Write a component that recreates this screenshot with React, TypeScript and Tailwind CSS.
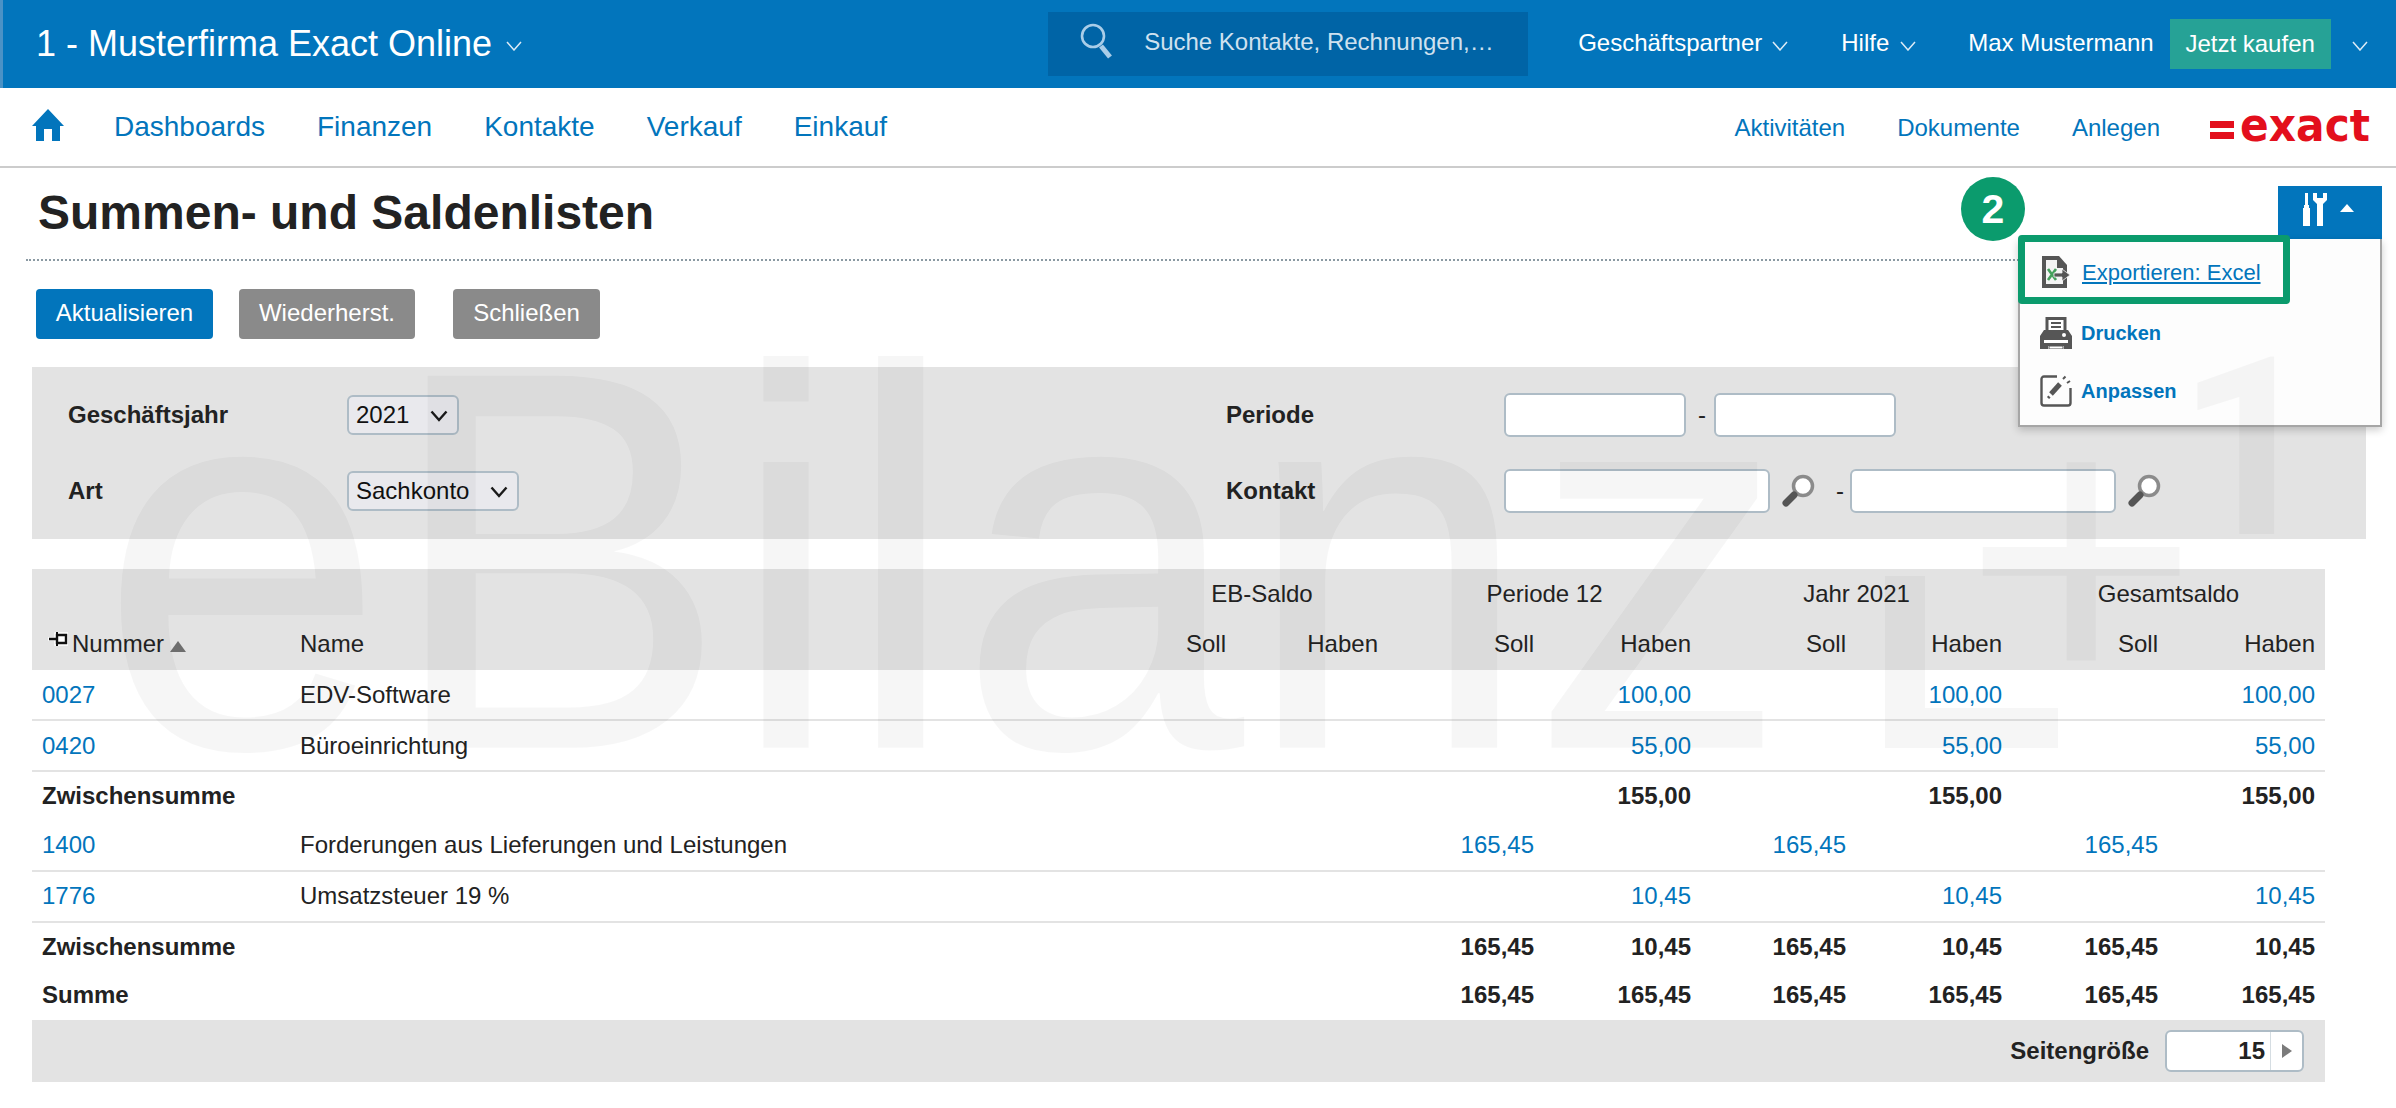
import { ReactNode } from "react";

const blue = "text-[#0275bc]";

type Row = { kind: "item" | "sum"; no?: string; name?: string; label?: string; values: string[] };

const rows: Row[] = [
  { kind: "item", no: "0027", name: "EDV-Software", values: ["", "", "", "100,00", "", "100,00", "", "100,00"] },
  { kind: "item", no: "0420", name: "Büroeinrichtung", values: ["", "", "", "55,00", "", "55,00", "", "55,00"] },
  { kind: "sum", label: "Zwischensumme", values: ["", "", "", "155,00", "", "155,00", "", "155,00"] },
  { kind: "item", no: "1400", name: "Forderungen aus Lieferungen und Leistungen", values: ["", "", "165,45", "", "165,45", "", "165,45", ""] },
  { kind: "item", no: "1776", name: "Umsatzsteuer 19 %", values: ["", "", "", "10,45", "", "10,45", "", "10,45"] },
  { kind: "sum", label: "Zwischensumme", values: ["", "", "165,45", "10,45", "165,45", "10,45", "165,45", "10,45"] },
  { kind: "sum", label: "Summe", values: ["", "", "165,45", "165,45", "165,45", "165,45", "165,45", "165,45"] },
];

function Chevron({ className = "" }: { className?: string }) {
  return (
    <svg width="16" height="10" viewBox="0 0 16 10" fill="none" className={className}>
      <path d="M1 1l7 8 7-8" stroke="#dcebf6" strokeWidth="1.5" />
    </svg>
  );
}

function SelectBox({ width, value, options }: { width: string; value: string; options: string[] }) {
  return (
    <div className={`relative ml-px h-10 ${width}`}>
      <select
        defaultValue={value}
        className="h-full w-full appearance-none rounded-[6px] border-2 border-[#aebcc6] bg-[#e9e9ed] pl-[7px] text-[24px] text-[#111]"
      >
        {options.map((o) => (
          <option key={o}>{o}</option>
        ))}
      </select>
      <svg width="18" height="12" viewBox="0 0 18 12" fill="none" className="pointer-events-none absolute right-[11px] top-[15px]">
        <path d="M1.5 1.5L9 10l7.5-8.5" stroke="#1a1a1a" strokeWidth="2.4" />
      </svg>
    </div>
  );
}

function Field({ width }: { width: string }) {
  return <input className={`h-11 rounded-[6px] border-2 border-[#aebcc6] bg-white ${width}`} />;
}

function Magnifier() {
  return (
    <svg width="34" height="34" viewBox="0 0 34 34" className="ml-3 shrink-0">
      <circle cx="21" cy="12" r="9.5" fill="#fff" stroke="#8b8b8b" strokeWidth="3.5" />
      <path d="M12 21L4 29" stroke="#555" strokeWidth="7" strokeLinecap="round" />
    </svg>
  );
}

function Label({ children }: { children: ReactNode }) {
  return <div className="text-[24px] font-bold text-[#222]">{children}</div>;
}

function ExcelIcon() {
  return (
    <svg width="28" height="32" viewBox="0 0 28 32">
      <path d="M0 0h17l8 9v23H0z" fill="#565656" />
      <path d="M4 4h11v8h6v16H4z" fill="#f4f4f4" />
      <path d="M6 13l8 11M14 13L6 24" stroke="#45a05c" strokeWidth="2.6" />
      <path d="M12 17h8v-4l8 6-8 6v-4h-8z" fill="#565656" stroke="#f4f4f4" strokeWidth="0.8" />
    </svg>
  );
}

function PrinterIcon() {
  return (
    <svg width="32" height="32" viewBox="0 0 32 32">
      <path d="M7 1.500h18v14H7z" fill="#fff" stroke="#565656" strokeWidth="3" />
      <path d="M11 6h10M11 10h10" stroke="#565656" strokeWidth="2" />
      <path d="M4 13h24l4 6v13H24v-3H8v3H0V19z" fill="#565656" />
      <path d="M4 23h24v3H4z" fill="#fff" />
      <circle cx="24" cy="18" r="2" fill="#fff" />
      <path d="M9 29h14v3H9z" fill="#fff" stroke="#565656" strokeWidth="1" />
    </svg>
  );
}

function EditIcon() {
  return (
    <svg width="32" height="32" viewBox="0 0 32 32" fill="none">
      <path d="M17 1.5H4A2.5 2.5 0 001.500 4v24A2.500 2.500 0 004 30.500h24a2.500 2.500 0 002.500-2.500V13" stroke="#565656" strokeWidth="2.400" />
      <path d="M11 19l9-10" stroke="#565656" strokeWidth="5" />
      <path d="M8 23l1.500-1.500" stroke="#565656" strokeWidth="3" />
      <path d="M23 4l2.500-2.500M27 8l3-2" stroke="#565656" strokeWidth="2" />
    </svg>
  );
}

function ToolsMenu() {
  return (
    <div className="relative mt-[18px]">
      <div className="flex h-[53px] w-[104px] items-start bg-[#0275bc] pl-[25px] pt-[7px]">
        <svg width="24" height="33" viewBox="0 0 24 33" fill="#fff">
          <path d="M2 0h3v12h1v3h1v18H0V15h1v-3h1z" />
          <path d="M10 0h4v5h6V0h4v7l-4 4v22h-6V11l-4-4z" />
        </svg>
        <svg width="14" height="8" viewBox="0 0 14 8" fill="#fff" className="ml-[13px] mt-[11px]">
          <path d="M7 0l7 8H0z" />
        </svg>
      </div>
      <div className="absolute -left-[317px] top-[-9px] flex h-16 w-16 items-center justify-center rounded-full bg-[#0b9b6d] text-[41px] font-bold leading-none text-white">
        2
      </div>
      <div className="absolute right-0 top-full z-10 w-[364px] border-2 border-t-0 border-[#a6a6a6] bg-[#fdfdfd] pb-[5px] pl-[20px] pt-1 text-[20px] shadow-[0_3px_8px_rgba(0,0,0,0.2)]">
        <a className={`flex h-[58px] items-center ${blue}`}>
          <span className="mx-[2px] flex w-[30px]"><ExcelIcon /></span>
          <span className="ml-[8px] text-[22px] underline">Exportieren: Excel</span>
        </a>
        <a className={`mt-[3px] flex h-[58px] items-center font-bold ${blue}`}>
          <PrinterIcon />
          <span className="ml-[9px]">Drucken</span>
        </a>
        <a className={`flex h-[58px] items-center font-bold ${blue}`}>
          <EditIcon />
          <span className="ml-[9px]">Anpassen</span>
        </a>
        <div className="absolute -left-[2px] -top-1 h-[69px] w-[272px] rounded-[4px] border-[7px] border-[#0b9b6d]" />
      </div>
    </div>
  );
}

export default function App() {
  return (
    <div className="relative h-[1108px] w-[2396px] overflow-hidden bg-white font-['Liberation_Sans',Arial,sans-serif] text-[24px] text-[#222]">
      {/* top bar */}
      <div className="flex h-[88px] items-center border-l-[3px] border-[#4a92c6] bg-[#0275bc] text-white">
        <div className="ml-[33px] text-[36px] leading-none">1 - Musterfirma Exact Online</div>
        <Chevron className="ml-[14px] mt-[3px]" />
        <div className="ml-[526px] flex h-16 w-[480px] items-center bg-[#0064a6] pl-[32px]">
          <svg width="34" height="38" viewBox="0 0 34 38" fill="none" className="-mt-1">
            <circle cx="13" cy="13" r="11" stroke="#a9cde8" strokeWidth="2.600" />
            <path d="M21 23l9 11" stroke="#a9cde8" strokeWidth="5" />
          </svg>
          <span className="-mt-[5px] ml-[30px] text-[#cfe1ef]">Suche Kontakte, Rechnungen,…</span>
        </div>
        <span className="ml-[50px] -mt-[2px]">Geschäftspartner</span>
        <Chevron className="ml-[10px] mt-[3px]" />
        <span className="ml-[53px] -mt-[2px]">Hilfe</span>
        <Chevron className="ml-[11px] mt-[3px]" />
        <span className="ml-[52px] -mt-[2px]">Max Mustermann</span>
        <div className="ml-[16px] flex h-[50px] w-[161px] items-center justify-center bg-[#26a296]">Jetzt kaufen</div>
        <Chevron className="ml-[21px] mt-[3px]" />
      </div>

      {/* nav */}
      <div className={`flex h-20 items-center border-b-2 border-[#cccccc] ${blue}`}>
        <svg width="32" height="32" viewBox="0 0 32 32" fill="#0275bc" className="ml-8 mt-[-4px]">
          <path d="M16 0l16 17h-4v15h-8V20h-8v12H4V17H0z" />
        </svg>
        <div className="ml-[50px] flex gap-[52px] text-[28px]">
          <span>Dashboards</span>
          <span>Finanzen</span>
          <span>Kontakte</span>
          <span>Verkauf</span>
          <span>Einkauf</span>
        </div>
        <div className="ml-auto mt-[2px] flex gap-[52px]">
          <span>Aktivitäten</span>
          <span>Dokumente</span>
          <span>Anlegen</span>
        </div>
        <svg width="160" height="36" viewBox="0 0 160 36" className="ml-[50px] mr-[26px] mt-[2px]" fill="#e30f1c">
          <rect x="0" y="11" width="24" height="7" />
          <rect x="0" y="22" width="24" height="7" />
          <text x="30" y="31" textLength="130" lengthAdjust="spacingAndGlyphs" fontFamily="DejaVu Sans" fontWeight="700" fontSize="47">
            exact
          </text>
        </svg>
      </div>

      {/* title */}
      <div className="ml-[26px] mr-[14px] flex h-[93px] items-start justify-between border-b-2 border-dotted border-[#8b9aa3]">
        <h1 className="ml-3 mt-[22px] text-[48px] font-bold leading-[46px] text-[#222]">Summen- und Saldenlisten</h1>
        <ToolsMenu />
      </div>

      {/* buttons */}
      <div className="ml-9 mt-[28px] flex text-white">
        <button className="h-[50px] w-[177px] rounded bg-[#0275bc] pb-[2px]">Aktualisieren</button>
        <button className="ml-[26px] h-[50px] w-[176px] rounded bg-[#8a8a8a] pb-[2px]">Wiederherst.</button>
        <button className="ml-[38px] h-[50px] w-[147px] rounded bg-[#8a8a8a] pb-[2px]">Schließen</button>
      </div>

      {/* filter */}
      <div className="ml-8 mt-[28px] grid h-[172px] w-[2334px] grid-cols-[278px_880px_278px_1fr] grid-rows-[44px_44px] items-center gap-y-[32px] bg-[#e3e3e3] pl-9 pt-[26px]">
        <Label>Geschäftsjahr</Label>
        <SelectBox width="w-[112px]" value="2021" options={["2021", "2020"]} />
        <Label>Periode</Label>
        <div className="flex items-center">
          <Field width="w-[182px]" />
          <span className="mx-[12px] w-[4px]">-</span>
          <Field width="w-[182px]" />
        </div>
        <Label>Art</Label>
        <SelectBox width="w-[172px]" value="Sachkonto" options={["Sachkonto", "Debitor"]} />
        <Label>Kontakt</Label>
        <div className="flex items-center">
          <Field width="w-[266px]" />
          <Magnifier />
          <span className="ml-[20px] mr-[10px] w-[4px]">-</span>
          <Field width="w-[266px]" />
          <Magnifier />
        </div>
      </div>

      {/* table */}
      <table className="ml-8 mt-[30px] w-[2293px] table-fixed border-separate border-spacing-0">
        <colgroup>
          <col className="w-[258px]" />
          <col className="w-[846px]" />
          <col className="w-[100px]" />
          <col className="w-[152px]" />
          <col className="w-[156px]" />
          <col className="w-[157px]" />
          <col className="w-[155px]" />
          <col className="w-[156px]" />
          <col className="w-[156px]" />
          <col className="w-[157px]" />
        </colgroup>
        <thead className="bg-[#e3e3e3] font-normal">
          <tr className="h-[49px]">
            <th colSpan={2} />
            <th colSpan={2} className="pt-[1px] font-normal">EB-Saldo</th>
            <th colSpan={2} className="pt-[1px] font-normal">Periode 12</th>
            <th colSpan={2} className="pt-[1px] font-normal">Jahr 2021</th>
            <th colSpan={2} className="pt-[1px] font-normal">Gesamtsaldo</th>
          </tr>
          <tr className="h-[52px]">
            <th className="pl-[16px] text-left font-normal">
              <div className="flex items-center">
                <svg width="20" height="16" viewBox="0 0 20 16" className="-mt-[8px]">
                  <path d="M0 7h8M8 2h11v10H8z" fill="#fff" stroke="#fff" strokeWidth="3.500" />
                  <path d="M1 7h7M9 3h9v8H9z" fill="none" stroke="#111" strokeWidth="2.400" />
                  <path d="M9 0v14" stroke="#111" strokeWidth="2" />
                </svg>
                <span className="ml-[4px]">Nummer</span>
                <svg width="16" height="11" viewBox="0 0 16 11" fill="#6e6e6e" className="ml-[6px] mt-[4px]">
                  <path d="M8 0l8 11H0z" />
                </svg>
              </div>
            </th>
            <th className="pl-[10px] text-left font-normal">Name</th>
            {["Soll", "Haben", "Soll", "Haben", "Soll", "Haben", "Soll", "Haben"].map((h, i) => (
              <th key={i} className="pr-[10px] text-right font-normal">{h}</th>
            ))}
          </tr>
        </thead>
        <tbody>
          {rows.map((r, i) =>
            r.kind === "item" ? (
              <tr key={i} className="h-[51px]">
                <td className={`border-b-2 border-[#e3e3e3] pl-[10px] ${blue}`}>{r.no}</td>
                <td className="border-b-2 border-[#e3e3e3] pl-[10px]">{r.name}</td>
                {r.values.map((v, j) => (
                  <td key={j} className={`border-b-2 border-[#e3e3e3] pr-[10px] text-right ${blue}`}>{v}</td>
                ))}
              </tr>
            ) : (
              <tr key={i} className="h-[48.500px] font-bold">
                <td colSpan={2} className="pl-[10px]">{r.label}</td>
                {r.values.map((v, j) => (
                  <td key={j} className="pr-[10px] text-right">{v}</td>
                ))}
              </tr>
            )
          )}
        </tbody>
      </table>

      {/* footer */}
      <div className="ml-8 flex h-[62px] w-[2293px] items-center justify-end bg-[#e3e3e3] pr-[21px]">
        <span className="font-bold">Seitengröße</span>
        <div className="ml-4 flex h-[42px] w-[139px] overflow-hidden rounded-[6px] border-2 border-[#aebcc6] bg-white">
          <span className="flex w-[103px] items-center justify-end pr-[5px] font-bold">15</span>
          <span className="flex flex-1 items-center justify-center border-l border-[#d5dde2]">
            <svg width="12" height="14" viewBox="0 0 12 14" fill="#7b7b7b"><path d="M1 0l10 7-10 7z" /></svg>
          </span>
        </div>
      </div>

      {/* watermark */}
      <div className="pointer-events-none absolute inset-0 z-20 overflow-hidden text-black/[0.035]">
        <div className="absolute left-[99px] top-[290px] origin-top-left scale-y-[1.05] whitespace-nowrap text-[515px] leading-none">eBilanz</div>
        <div className="absolute left-[1885px] top-[576px] h-[172px] w-[173px] border-b-[40px] border-l-[40px] border-black/[0.035]" />
        <div className="absolute left-[1963px] top-[353px] text-[405px] leading-none">+</div>
        <div className="absolute left-[2177px] top-[326px] font-['Roboto'] text-[248px] font-bold leading-none">1</div>
      </div>
    </div>
  );
}
